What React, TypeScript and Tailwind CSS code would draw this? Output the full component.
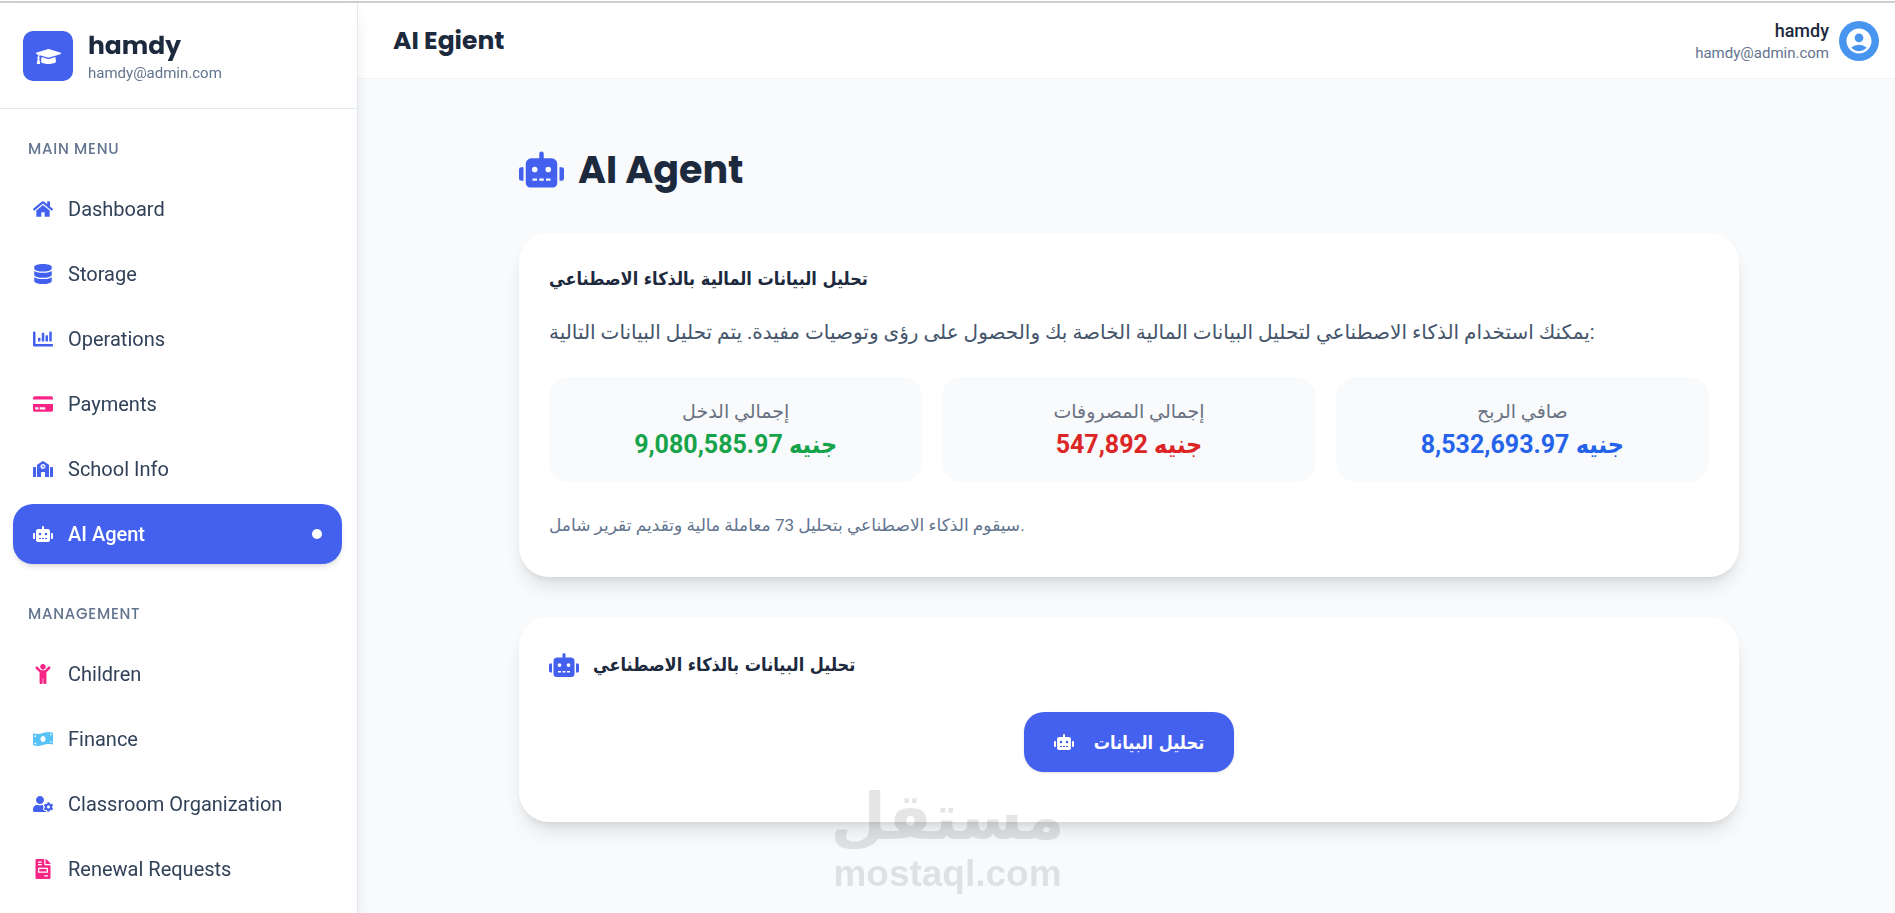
import React from 'react';
import type { IconType } from 'react-icons';
import {
  FaChartBar,
  FaChild,
  FaCreditCard,
  FaDatabase,
  FaFileInvoice,
  FaGraduationCap,
  FaHome,
  FaMoneyBillWave,
  FaRobot,
  FaSchool,
  FaUserCog
} from 'react-icons/fa';
import { MdAccountCircle } from 'react-icons/md';

interface MenuItem {
  label: string;
  icon: IconType;
  color: string;
  active?: boolean;
}

interface Stat {
  label: string;
  value: string;
  color: string;
}

const mainMenu: MenuItem[] = [
  { label: 'Dashboard', icon: FaHome, color: 'text-[#4361ee]' },
  { label: 'Storage', icon: FaDatabase, color: 'text-[#4361ee]' },
  { label: 'Operations', icon: FaChartBar, color: 'text-[#4361ee]' },
  { label: 'Payments', icon: FaCreditCard, color: 'text-[#f72585]' },
  { label: 'School Info', icon: FaSchool, color: 'text-[#4361ee]' },
  { label: 'AI Agent', icon: FaRobot, color: 'text-white', active: true }
];

const managementMenu: MenuItem[] = [
  { label: 'Children', icon: FaChild, color: 'text-[#f72585]' },
  { label: 'Finance', icon: FaMoneyBillWave, color: 'text-[#56c2f6]' },
  { label: 'Classroom Organization', icon: FaUserCog, color: 'text-[#4361ee]' },
  { label: 'Renewal Requests', icon: FaFileInvoice, color: 'text-[#f72585]' }
];

const stats: Stat[] = [
  { label: 'إجمالي الدخل', value: '9,080,585.97 جنيه', color: 'text-[#16a34a]' },
  { label: 'إجمالي المصروفات', value: '547,892 جنيه', color: 'text-[#dc2626]' },
  { label: 'صافي الربح', value: '8,532,693.97 جنيه', color: 'text-[#2563eb]' }
];

function MenuSection({ title, items }: { title: string; items: MenuItem[] }) {
  return (
    <section className="mb-10">
      <h2 className="mb-5 px-[15px] font-[Poppins,Inter,sans-serif] text-[15px] leading-5 font-medium tracking-wider text-slate-500 uppercase">
        {title}
      </h2>
      <ul className="flex flex-col gap-[5px]">
        {items.map(({ label, icon: Icon, color, active }) => (
          <li key={label}>
            <a
              href="#"
              className={`flex h-15 items-center gap-[15px] rounded-[20px] px-5 text-[20px] ${
                active ? 'bg-[#4361ee] font-medium text-white shadow-md' : 'text-slate-700'
              }`}
            >
              <Icon className={`size-5 ${color}`} />
              <span className="flex-1">{label}</span>
              {active && <span className="size-[10px] rounded-full bg-white" />}
            </a>
          </li>
        ))}
      </ul>
    </section>
  );
}

function Sidebar() {
  return (
    <aside className="z-10 w-[358px] shrink-0 border-r border-slate-200 bg-white shadow-lg">
      <div className="flex items-center gap-[15px] border-b border-slate-200 px-[23px] pt-[26px] pb-[25px]">
        <div className="flex size-[50px] items-center justify-center rounded-[10px] bg-[#4361ee] text-white">
          <FaGraduationCap className="size-[25px]" />
        </div>
        <div>
          <p className="font-[Poppins,Inter,sans-serif] text-[25px] leading-[34px] font-bold text-slate-800">hamdy</p>
          <p className="text-[15px] leading-5 text-slate-500">hamdy@admin.com</p>
        </div>
      </div>
      <nav className="pt-[30px] pr-[15px] pl-[13px]">
        <MenuSection title="Main Menu" items={mainMenu} />
        <MenuSection title="Management" items={managementMenu} />
      </nav>
    </aside>
  );
}

function Header() {
  return (
    <header className="flex h-[76px] items-center justify-between border-b border-gray-100 bg-white pr-4 pl-[35px]">
      <h1 className="font-[Poppins,Inter,sans-serif] text-[25px] font-bold text-slate-800">AI Egient</h1>
      <div className="flex items-center gap-[10px]">
        <div className="text-right">
          <p className="text-[18px] leading-6 font-medium text-slate-800">hamdy</p>
          <p className="text-[15px] leading-5 text-slate-500">hamdy@admin.com</p>
        </div>
        <div className="flex size-10 items-center justify-center rounded-full bg-[#4895ef] text-white">
          <MdAccountCircle className="size-[30px]" />
        </div>
      </div>
    </header>
  );
}

function Card({ children }: { children: React.ReactNode }) {
  return (
    <div className="rounded-[30px] bg-white p-[30px] shadow-[0_13px_19px_-4px_rgba(0,0,0,0.1),0_5px_8px_-4px_rgba(0,0,0,0.1)]">
      {children}
    </div>
  );
}

function Watermark() {
  return (
    <div className="pointer-events-none fixed inset-x-0 bottom-[18px] flex flex-col items-center text-black opacity-10">
      <span className="font-['DejaVu_Sans',sans-serif] text-[64px] leading-[72px] font-bold">مستقل</span>
      <span className="font-['Liberation_Sans',sans-serif] text-[37px] leading-[42px] font-bold">mostaql.com</span>
    </div>
  );
}

function App() {
  return (
    <div className="h-screen overflow-hidden bg-white pt-px font-[Roboto,'DejaVu_Sans',sans-serif]">
      <div className="h-[2px] bg-[#cbcfcd]" />
      <div className="flex h-full">
        <Sidebar />
        <div className="flex min-w-0 flex-1 flex-col bg-slate-50">
          <Header />
          <main className="flex-1 pl-[5px]">
            <div className="mx-auto flex max-w-[1220px] flex-col gap-10 pt-[66px]">
              <h2 className="flex h-12 items-center gap-[14px] font-[Poppins,Inter,sans-serif] text-[38px] font-bold text-slate-800">
                <FaRobot className="size-[45px] text-[#4361ee]" />
                AI Agent
              </h2>

              <Card>
                <h3 className="mb-[22px] font-['DejaVu_Sans_Condensed','DejaVu_Sans',sans-serif] text-[18px] leading-[31px] font-bold text-slate-800">
                  تحليل البيانات المالية بالذكاء الاصطناعي
                </h3>
                <p className="mb-[29px] text-[20px] leading-8 text-slate-600">
                  يمكنك استخدام الذكاء الاصطناعي لتحليل البيانات المالية الخاصة بك والحصول على رؤى وتوصيات مفيدة. يتم تحليل البيانات التالية:
                </p>
                <div className="mb-[30px] grid grid-cols-3 gap-5">
                  {stats.map((stat) => (
                    <div key={stat.label} className="rounded-[20px] bg-slate-50 py-5 text-center">
                      <p className="text-[19px] leading-[30px] text-gray-500">{stat.label}</p>
                      <p
                        className={`font-[Roboto,'DejaVu_Sans_Condensed','DejaVu_Sans',sans-serif] text-[25px] leading-[35px] font-bold ${stat.color}`}
                      >
                        {stat.value}
                      </p>
                    </div>
                  ))}
                </div>
                <p className="mb-[9px] text-[17px] leading-[26px] text-slate-500">
                  سيقوم الذكاء الاصطناعي بتحليل 73 معاملة مالية وتقديم تقرير شامل.
                </p>
              </Card>

              <Card>
                <div className="mb-[30px] flex items-center gap-[14px]">
                  <FaRobot className="size-[30px] text-[#4361ee]" />
                  <h3 className="font-['DejaVu_Sans_Condensed','DejaVu_Sans',sans-serif] text-[18px] leading-[35px] font-bold text-slate-800">
                    تحليل البيانات بالذكاء الاصطناعي
                  </h3>
                </div>
                <div className="mb-5 flex justify-center">
                  <button
                    type="button"
                    className="flex h-15 items-center gap-5 rounded-[20px] bg-[#4361ee] px-[30px] font-['DejaVu_Sans_Condensed','DejaVu_Sans',sans-serif] text-[18px] font-bold text-white shadow-sm"
                  >
                    <FaRobot className="size-5" />
                    تحليل البيانات
                  </button>
                </div>
              </Card>
            </div>
          </main>
        </div>
      </div>
      <Watermark />
    </div>
  );
}

export default App;
